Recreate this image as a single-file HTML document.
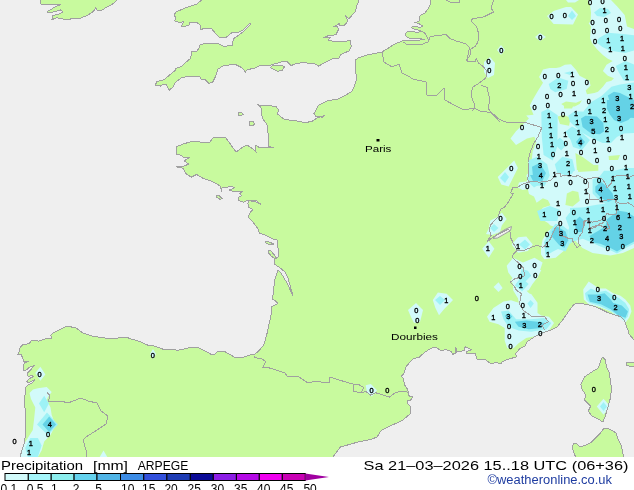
<!DOCTYPE html><html><head><meta charset="utf-8"><style>
html,body{margin:0;padding:0;background:#fff;}
body{width:634px;height:490px;overflow:hidden;position:relative;font-family:"Liberation Sans",sans-serif;}
svg{position:absolute;left:0;top:0;will-change:transform;}
</style></head><body>
<svg width="634" height="490" viewBox="0 0 634 490">
<rect x="0" y="0" width="634" height="457" fill="#c8fa9e"/>
<polygon points="-3.0,-3.0 40.4,-3.0 40.4,3.8 44.0,5.0 51.7,4.5 60.6,4.5 54.0,7.6 46.7,12.0 49.0,13.0 60.6,10.0 63.0,12.0 59.0,13.9 53.0,15.6 51.7,19.7 56.8,17.7 63.0,19.0 68.0,20.0 73.0,18.0 80.8,18.0 87.0,15.6 93.4,11.4 96.0,7.6 97.0,10.0 101.0,10.6 106.0,7.6 111.0,5.0 116.0,1.3 118.6,-3.0 205.0,-3.0 197.0,4.0 185.0,8.0 176.0,12.0 174.0,15.0 176.0,18.0 174.3,20.9 179.5,22.6 183.8,21.7 181.2,26.0 183.8,27.0 189.0,24.9 190.0,22.6 196.8,22.6 200.3,25.2 200.3,29.5 205.5,28.3 211.6,28.7 216.0,33.9 219.4,37.3 226.3,37.3 231.5,33.0 238.5,32.1 243.7,29.5 249.8,23.5 250.6,24.3 243.7,31.3 236.7,36.5 233.3,39.0 232.4,45.2 227.2,46.0 222.9,46.0 217.7,43.4 209.0,43.4 200.3,44.3 199.4,47.8 196.8,51.2 191.6,51.2 190.8,58.2 184.7,63.4 182.1,66.0 176.0,68.6 175.2,70.3 169.0,75.5 163.9,79.9 157.0,81.6 155.2,85.0 160.4,86.0 163.0,84.2 166.5,85.0 169.0,90.3 173.4,86.8 175.2,82.5 182.1,77.3 191.6,76.4 199.4,76.4 201.2,79.0 205.5,79.9 209.0,83.3 212.5,82.5 216.0,75.5 217.7,69.4 222.9,66.0 229.8,64.8 235.0,64.2 240.2,66.8 243.7,69.4 245.4,72.0 247.2,69.4 254.0,68.6 257.6,66.8 261.0,65.0 271.0,65.0 281.0,62.0 287.4,61.7 291.0,65.7 294.7,64.0 303.9,62.4 309.4,63.5 315.0,64.0 318.6,66.1 324.0,63.0 333.3,58.4 338.8,58.4 340.7,54.7 344.3,52.9 349.0,51.0 350.8,47.4 351.2,46.9 350.7,40.8 348.7,40.8 339.5,41.8 333.9,41.3 328.3,40.3 330.3,37.2 323.2,37.8 328.3,35.7 335.9,34.7 338.5,29.6 337.4,26.5 332.9,27.0 339.5,23.5 340.0,25.5 344.6,25.0 347.7,21.4 345.6,15.3 348.7,18.9 355.8,11.2 356.3,7.1 357.9,3.1 359.4,-3.0 431.0,-3.0 430.7,3.1 428.7,8.2 424.6,13.3 420.5,15.3 419.5,16.8 420.0,20.4 417.4,21.9 415.4,22.4 419.5,24.0 422.6,26.0 420.5,27.6 414.9,26.0 411.8,27.0 412.3,28.6 416.4,29.6 422.0,31.5 418.0,32.2 407.2,31.6 405.2,33.7 406.2,36.2 408.3,37.8 412.0,38.6 418.5,38.6 425.0,39.3 418.0,40.3 410.0,40.5 403.2,40.6 395.0,43.9 382.0,52.0 368.2,54.7 359.0,57.5 355.4,60.2 356.3,80.4 354.4,86.0 351.7,91.5 344.3,96.0 338.8,98.8 327.8,100.7 318.6,105.3 314.0,113.5 315.8,116.3 322.3,117.2 325.0,115.4 316.8,118.0 313.0,120.9 305.7,122.7 296.5,120.9 289.2,120.0 283.7,118.9 277.4,113.9 278.6,110.0 276.0,106.3 258.4,105.0 261.0,107.6 262.2,117.7 267.3,125.2 268.5,137.9 268.5,146.7 273.6,147.4 260.0,148.0 256.0,145.0 255.0,148.0 256.0,152.0 253.0,149.0 247.0,145.0 243.0,147.0 236.0,152.0 226.0,138.0 221.0,137.0 213.0,138.0 210.0,142.0 204.0,142.0 200.0,142.0 198.0,141.0 190.0,142.0 183.0,144.0 176.0,147.0 176.0,154.0 180.0,155.0 185.0,158.0 190.0,157.0 184.0,161.0 189.0,164.0 184.0,166.0 176.4,166.9 182.7,168.1 186.5,174.4 191.5,177.0 196.6,174.4 202.9,178.2 210.5,180.8 215.0,182.9 220.7,186.4 221.4,192.1 222.0,187.9 227.9,187.1 232.0,186.0 234.3,187.9 229.3,190.0 233.6,191.4 242.0,191.4 240.0,193.6 241.4,195.7 237.9,197.9 238.6,200.7 243.6,202.1 247.9,200.0 253.6,200.0 256.4,200.7 260.7,204.3 256.4,202.1 249.3,200.7 247.9,203.6 248.6,207.1 252.9,209.3 249.3,213.6 248.6,217.9 252.9,222.1 257.9,228.6 259.3,232.9 266.4,235.7 273.6,239.3 277.1,240.0 277.1,245.0 279.0,251.0 278.0,257.0 275.0,259.0 274.0,264.0 279.0,267.0 285.0,272.0 288.0,278.0 290.0,285.0 293.0,296.0 287.0,283.0 281.0,273.0 278.0,270.0 276.0,276.0 274.5,280.0 273.9,288.0 272.5,299.0 275.0,300.5 278.0,303.7 274.5,305.3 271.6,307.0 271.8,310.6 269.8,320.8 266.7,335.0 263.7,345.0 258.6,351.0 254.5,354.5 250.4,355.0 244.3,357.0 240.0,357.3 234.6,357.3 225.2,351.8 217.3,351.5 214.9,354.2 211.0,354.2 204.7,351.0 199.1,347.9 194.4,347.1 188.9,347.9 177.9,350.2 171.5,349.4 163.7,349.4 152.6,345.5 147.9,345.2 140.0,341.5 131.0,339.0 126.0,337.0 111.0,339.0 92.0,336.0 83.0,333.0 76.0,328.0 67.0,326.0 61.0,329.0 53.0,333.0 50.8,335.0 51.4,338.1 45.9,338.7 38.5,341.1 35.4,340.5 31.2,340.5 29.3,343.6 22.6,344.8 19.5,348.5 18.9,353.4 17.7,354.6 21.4,354.6 22.6,358.3 23.8,361.3 28.7,361.3 25.0,362.6 23.2,365.6 23.8,370.5 26.3,369.9 29.9,366.9 34.2,365.6 31.2,369.3 27.5,373.0 28.1,376.7 31.8,375.4 33.6,376.7 29.3,378.5 26.9,381.6 28.7,382.8 34.8,379.7 32.4,382.8 27.5,385.2 25.6,387.7 25.0,395.0 24.0,400.0 26.0,415.0 25.0,438.0 24.0,444.0 19.0,460.0 -3.0,460.0" fill="#efefef"/>
<polygon points="333.0,457.0 340.5,447.0 358.0,442.0 370.8,439.5 377.0,437.0 381.0,430.7 391.0,425.6 402.0,420.6 410.0,414.0 410.7,410.0 410.0,405.7 407.1,402.9 407.9,400.0 410.7,400.0 412.9,397.1 408.6,395.7 407.9,390.0 404.3,384.3 403.6,378.6 401.4,376.4 404.3,372.9 405.7,367.1 409.3,362.9 413.6,358.6 419.3,357.1 425.0,352.1 431.3,348.1 436.0,347.4 440.8,350.5 446.3,349.7 451.0,351.3 452.6,354.4 455.8,352.9 455.8,346.6 456.5,352.1 464.4,350.5 465.2,346.6 471.5,349.7 466.8,351.3 466.0,353.7 475.5,353.7 477.0,359.2 485.7,360.0 491.2,363.9 496.0,362.3 500.7,363.9 502.3,361.5 508.6,359.2 516.5,356.8 515.7,353.7 519.6,348.9 525.0,345.8 527.0,341.8 534.6,336.8 542.0,333.0 549.7,330.5 557.3,326.7 562.3,320.4 568.6,311.5 574.0,304.3 578.9,303.1 586.2,304.3 593.6,306.1 600.9,309.2 608.3,312.9 615.6,315.3 620.5,316.5 624.2,320.2 625.4,322.7 626.7,327.5 627.9,330.0 629.1,334.2 634.0,339.9 634.0,457.0" fill="#efefef"/>
<polygon points="602.9,357.2 605.3,359.6 606.6,367.0 609.0,371.9 610.2,379.2 611.5,389.0 610.2,398.8 607.8,407.4 605.3,416.0 602.9,422.0 599.2,419.6 591.9,416.0 588.2,411.0 590.6,406.2 584.5,400.0 585.7,395.1 582.0,389.0 580.8,384.1 584.5,376.8 591.9,371.9 598.0,368.2 600.4,362.0 601.7,358.4" fill="#c8fa9e"/>
<polygon points="573.5,443.0 572.3,447.8 574.7,455.2 577.0,458.0 623.7,458.0 621.3,445.4 617.6,438.0 616.4,433.1 607.8,428.2 604.0,428.2 600.4,433.1 591.9,441.7 585.7,445.4 579.6,446.6 575.9,443.0" fill="#c8fa9e"/>
<polygon points="270.3,67.7 272.6,65.5 282.0,65.0 284.4,67.0 282.0,70.5 277.4,71.3 274.2,69.7" fill="#c8fa9e"/>
<polygon points="626.0,363.0 630.0,362.0 634.0,362.0 634.0,366.0 629.0,366.0 626.0,365.0" fill="#c8fa9e"/>
<polygon points="216.4,196.0 219.0,195.5 222.0,198.5 220.0,199.3 217.0,197.5" fill="#c8fa9e"/>
<polygon points="265.0,241.0 268.0,241.5 274.0,244.0 273.0,245.0 268.0,244.0 265.0,242.5" fill="#c8fa9e"/>
<polygon points="268.0,250.0 271.0,251.0 276.0,257.0 275.0,259.0 271.0,256.0 268.0,252.0" fill="#c8fa9e"/>
<polygon points="238.0,113.0 241.0,112.0 243.0,114.5 241.0,116.0 238.0,115.5" fill="#c8fa9e"/>
<polygon points="249.0,122.0 253.0,121.5 255.0,124.0 252.0,126.0 249.0,125.0" fill="#c8fa9e"/>
<g>
<polygon points="588.0,0.0 611.0,0.0 617.0,6.3 624.7,15.0 627.0,26.5 634.0,29.0 634.0,248.0 622.9,253.0 610.3,255.6 592.6,253.0 582.5,248.0 575.0,240.5 568.0,244.0 565.5,249.5 555.7,257.7 544.3,259.3 541.0,254.4 541.0,247.9 542.6,239.7 547.5,231.5 554.3,226.7 550.5,225.5 548.0,223.0 541.6,219.2 539.1,212.9 542.9,207.8 550.5,205.3 548.0,200.2 542.9,198.3 536.6,202.8 534.0,196.5 529.0,193.9 527.8,188.9 522.7,190.1 517.7,187.6 518.9,182.6 527.1,181.3 526.5,175.0 528.0,173.5 530.7,168.0 531.7,160.6 532.6,151.4 536.3,142.3 534.4,136.7 527.0,138.6 516.0,145.0 510.5,138.6 516.0,131.2 528.9,118.4 526.2,115.6 533.5,114.7 529.8,105.5 532.6,100.0 538.0,90.8 543.0,82.7 539.0,77.0 540.5,74.5 543.0,69.6 549.5,68.0 556.0,68.0 560.0,67.2 564.9,64.8 571.0,64.2 575.9,69.7 579.6,75.8 584.5,78.3 589.4,80.7 590.6,85.6 585.7,90.5 587.0,94.2 594.3,93.0 598.0,91.7 602.9,86.8 606.5,82.0 611.4,80.7 613.9,78.3 607.8,75.8 602.9,70.9 606.5,64.8 612.7,61.1 607.8,58.7 602.9,55.0 597.0,49.2 592.0,43.0 590.0,37.9 591.0,26.5 588.7,23.3 590.6,21.5 591.0,12.6 590.0,5.0" fill="#d2fafa"/>
<polygon points="547.0,16.0 553.6,11.0 566.0,7.0 571.0,7.0 578.0,14.5 573.0,24.5 553.6,24.0" fill="#d2fafa"/>
<polygon points="566.0,0.0 579.0,0.0 575.0,2.5 568.0,2.5" fill="#d2fafa"/>
<polygon points="535.0,37.0 540.0,33.0 546.0,37.0 540.0,41.0" fill="#d2fafa"/>
<polygon points="497.0,50.0 501.0,45.0 505.0,50.0 501.0,55.0" fill="#d2fafa"/>
<polygon points="484.0,62.0 490.0,57.0 495.0,63.0 494.0,75.0 488.0,78.0 484.0,72.0" fill="#d2fafa"/>
<polygon points="497.7,177.0 505.0,169.8 514.2,160.6 517.9,168.0 508.7,186.4 501.3,184.5" fill="#d2fafa"/>
<polygon points="490.3,220.6 496.9,217.3 501.8,212.4 506.7,219.0 501.8,225.5 500.0,232.0 492.0,235.0 486.0,234.0 488.7,228.8" fill="#d2fafa"/>
<polygon points="482.2,248.7 488.7,241.3 494.4,248.7 488.7,257.7" fill="#d2fafa"/>
<polygon points="511.6,244.6 518.1,237.3 526.3,236.4 532.8,244.6 527.9,251.1 518.1,252.8" fill="#d2fafa"/>
<polygon points="506.7,265.8 513.2,257.7 523.0,262.6 534.5,257.7 542.6,262.6 537.7,277.3 529.6,283.8 526.3,290.4 532.8,296.9 536.1,305.0 519.8,305.0 518.1,298.5 513.2,290.4 513.2,278.9 508.3,272.4" fill="#d2fafa"/>
<polygon points="493.6,287.1 498.5,282.2 502.6,287.9 498.5,292.0" fill="#d2fafa"/>
<polygon points="583.2,289.6 588.7,281.6 593.6,284.7 598.5,288.4 605.8,288.4 613.2,293.3 620.5,295.7 625.4,299.4 630.3,305.5 631.5,311.6 629.1,317.8 625.4,322.7 620.5,319.0 610.7,311.6 598.5,306.7 588.7,304.3 583.8,299.4" fill="#d2fafa"/>
<polygon points="487.0,316.7 493.4,307.9 503.5,301.5 511.0,300.3 518.6,302.8 518.6,295.2 523.7,292.7 531.2,294.0 537.5,302.8 537.5,312.9 541.3,315.4 548.9,316.7 554.0,323.0 548.9,330.6 538.8,335.6 526.2,338.1 518.6,343.2 513.6,348.2 507.3,348.2 504.7,340.7 504.7,328.0 498.4,324.3 489.6,321.7" fill="#d2fafa"/>
<polygon points="511.0,280.0 516.0,273.8 518.6,270.0 541.3,270.0 537.5,277.6 532.5,283.9 528.7,290.2 523.7,291.5 516.0,290.2" fill="#d2fafa"/>
<polygon points="432.8,300.0 437.9,292.5 446.7,293.8 453.0,300.0 444.2,309.0 439.0,315.2 435.3,307.7" fill="#d2fafa"/>
<polygon points="408.0,310.0 416.0,303.0 423.0,310.0 420.0,322.0 414.0,323.0 411.0,317.0" fill="#d2fafa"/>
<polygon points="365.7,385.2 370.8,384.0 377.0,390.3 372.0,396.6 367.0,392.8" fill="#d2fafa"/>
<polygon points="35.3,373.0 40.4,366.8 45.4,374.4 40.4,380.7" fill="#d2fafa"/>
<polygon points="150.0,354.0 153.0,349.0 156.0,354.0 153.0,359.0" fill="#d2fafa"/>
<polygon points="37.9,388.2 46.7,387.0 51.7,392.0 48.0,397.0 46.7,400.0 50.5,407.6 51.7,415.0 55.5,425.0 50.5,435.0 44.2,441.6 41.6,450.5 37.9,457.0 20.0,457.0 24.0,444.0 27.8,437.9 32.8,430.0 34.0,420.0 35.3,407.6 31.0,399.0 29.5,393.0 33.0,389.5" fill="#d2fafa"/>
<polygon points="99.7,457.0 103.5,450.5 107.3,457.0" fill="#d2fafa"/>
<polygon points="596.8,406.5 603.5,398.8 610.2,406.5 603.5,414.7" fill="#d2fafa"/>
<polygon points="557.5,116.4 564.0,115.0 570.8,118.0 569.0,125.8 560.0,124.0" fill="#c8fa9e"/>
<polygon points="561.2,104.0 566.0,101.5 576.0,102.8 582.0,100.3 579.6,104.0 574.7,106.4 564.9,106.4" fill="#c8fa9e"/>
<polygon points="575.4,152.9 582.6,157.1 592.6,164.3 595.4,170.0 576.9,170.0" fill="#c8fa9e"/>
<polygon points="576.9,165.0 598.3,165.0 598.3,170.7 578.3,172.1" fill="#c8fa9e"/>
<polygon points="566.9,193.6 572.6,190.7 578.3,192.1 579.7,200.7 572.6,206.4 565.4,205.0" fill="#c8fa9e"/>
<polygon points="564.0,103.0 574.0,104.0 572.0,108.6 564.0,108.6" fill="#c8fa9e"/>
<polygon points="608.6,156.0 620.0,155.0 618.0,160.0 609.0,160.0" fill="#c8fa9e"/>
<polygon points="594.0,12.5 600.0,8.0 608.0,9.0 611.0,13.0 604.0,17.0 597.0,16.0" fill="#9ef2f6"/>
<polygon points="568.0,16.0 572.0,10.6 576.0,16.0 572.0,20.0" fill="#9ef2f6"/>
<polygon points="599.0,37.9 608.0,32.8 623.0,34.0 634.0,35.3 634.0,50.5 625.0,53.0 609.5,50.5 602.0,46.7 596.0,42.0" fill="#9ef2f6"/>
<polygon points="615.7,66.0 625.5,61.0 634.0,64.5 634.0,80.8 623.9,80.8 619.0,72.7" fill="#9ef2f6"/>
<polygon points="583.0,112.0 591.2,102.0 601.6,96.0 611.4,86.8 620.0,84.4 634.0,82.5 634.0,132.9 624.0,133.6 616.9,137.0 611.0,142.9 602.6,142.9 592.6,138.6 582.6,132.9 574.0,125.7 569.7,121.4 568.3,115.7 574.0,111.4 582.6,111.4" fill="#9ef2f6"/>
<polygon points="566.9,132.9 572.6,127.1 579.7,132.9 586.9,141.4 581.1,147.1 574.0,142.9 568.3,137.1" fill="#9ef2f6"/>
<polygon points="564.0,165.0 572.6,165.0 572.6,173.6 564.0,176.4" fill="#9ef2f6"/>
<polygon points="592.6,179.3 599.7,176.4 604.0,170.7 614.0,170.7 625.4,167.9 634.0,167.9 634.0,243.7 625.8,248.1 617.0,253.6 610.4,250.3 599.3,245.9 589.4,241.5 582.8,238.7 572.8,241.5 566.0,247.0 569.4,244.0 568.2,230.1 572.6,222.1 578.3,210.7 586.9,206.4 595.4,205.0 605.4,203.6 599.7,200.7 592.6,193.6 592.6,185.0" fill="#9ef2f6"/>
<polygon points="548.7,84.0 558.5,77.6 568.3,80.8 566.7,89.0 555.2,92.3 550.3,89.0" fill="#9ef2f6"/>
<polygon points="541.3,112.0 548.0,108.8 557.7,115.3 557.4,146.0 552.8,160.6 543.6,155.0 541.8,136.7" fill="#9ef2f6"/>
<polygon points="564.0,73.0 570.0,71.5 575.0,72.0 570.0,75.0" fill="#9ef2f6"/>
<polygon points="553.5,142.8 559.8,137.8 567.4,144.1 561.1,150.4" fill="#9ef2f6"/>
<polygon points="554.8,164.3 562.3,156.7 572.4,159.2 575.0,170.6 567.4,175.6 557.3,173.1" fill="#9ef2f6"/>
<polygon points="570.0,138.0 578.0,129.0 590.0,140.0 582.0,150.0 573.0,147.0" fill="#9ef2f6"/>
<polygon points="565.0,132.0 572.0,126.4 580.0,131.0 573.0,137.8" fill="#9ef2f6"/>
<polygon points="528.3,160.5 537.1,156.7 547.2,164.3 549.7,175.6 544.7,185.7 532.0,185.7 528.3,175.6" fill="#9ef2f6"/>
<polygon points="527.8,175.0 546.7,175.0 546.7,180.0 540.4,183.8 534.0,187.6 530.3,183.8 527.8,180.0" fill="#9ef2f6"/>
<polygon points="537.1,211.0 549.7,205.9 559.8,209.7 557.3,221.0 540.4,221.0" fill="#9ef2f6"/>
<polygon points="570.0,208.0 585.0,207.2 592.6,211.0 585.0,230.0 570.0,230.0" fill="#9ef2f6"/>
<polygon points="569.4,212.9 580.0,210.3 580.0,235.0 569.4,228.0 565.6,217.9" fill="#9ef2f6"/>
<polygon points="500.0,178.0 505.0,172.0 509.0,177.0 505.0,183.0" fill="#9ef2f6"/>
<polygon points="490.0,228.0 494.0,224.0 498.5,228.0 494.0,232.0" fill="#9ef2f6"/>
<polygon points="549.2,231.4 555.5,223.8 561.9,225.1 568.2,230.1 569.4,244.0 565.6,251.6 558.0,249.0 553.0,251.6 545.5,256.0 544.0,242.0 547.0,236.0" fill="#9ef2f6"/>
<polygon points="519.0,244.6 525.0,239.5 530.0,244.6 525.0,249.5" fill="#9ef2f6"/>
<polygon points="521.4,269.1 527.9,270.8 531.2,275.7 524.7,282.2 521.4,290.4 514.8,285.5 519.8,278.9" fill="#9ef2f6"/>
<polygon points="585.0,293.3 590.9,288.4 598.5,292.0 605.8,290.8 612.0,294.5 619.3,298.2 625.4,303.1 629.1,309.2 627.9,316.5 624.2,320.2 619.3,316.5 609.5,310.4 598.5,305.5 589.9,303.1 586.2,299.4" fill="#9ef2f6"/>
<polygon points="501.0,311.6 508.5,310.4 516.1,319.2 531.2,319.2 543.8,318.0 551.4,323.0 546.4,329.3 531.2,331.8 518.6,330.6 508.5,326.8 503.5,319.2" fill="#9ef2f6"/>
<polygon points="527.4,303.5 530.6,300.0 533.8,303.5 530.6,307.9" fill="#9ef2f6"/>
<polygon points="516.0,284.0 521.0,277.6 528.7,284.0 522.0,291.5" fill="#9ef2f6"/>
<polygon points="435.0,300.0 440.0,296.0 445.0,300.0 440.0,305.0" fill="#9ef2f6"/>
<polygon points="44.2,395.8 49.0,403.4 44.2,412.2 39.0,403.4" fill="#9ef2f6"/>
<polygon points="47.0,412.6 58.0,424.6 48.0,435.3 37.0,424.6" fill="#9ef2f6"/>
<polygon points="30.3,437.9 37.9,437.9 41.6,445.4 37.9,457.0 27.8,457.0 25.2,448.0" fill="#9ef2f6"/>
<polygon points="600.0,406.5 603.5,402.0 607.0,406.5 603.5,411.0" fill="#9ef2f6"/>
<polygon points="607.8,95.4 613.9,91.7 620.0,93.0 634.0,100.0 634.0,118.0 620.0,117.0 611.4,106.4" fill="#64d2e6"/>
<polygon points="581.0,118.6 585.4,115.7 596.9,116.4 603.3,122.9 604.0,131.4 599.7,134.3 591.0,133.6 582.6,127.1" fill="#64d2e6"/>
<polygon points="606.9,100.0 634.0,100.0 634.0,114.3 628.3,120.0 621.0,122.9 614.0,120.0 609.7,114.3 606.9,108.6" fill="#64d2e6"/>
<polygon points="595.4,186.4 601.1,182.1 606.9,186.4 612.6,193.6 614.0,199.3 608.3,202.1 601.1,197.9 595.4,192.1" fill="#64d2e6"/>
<polygon points="605.4,226.4 606.9,219.3 618.3,210.7 626.9,212.1 634.0,216.4 634.0,241.5 625.8,246.0 617.0,251.4 610.4,248.1 600.4,243.7 592.7,242.6 589.4,236.0 597.1,231.6" fill="#64d2e6"/>
<polygon points="574.0,222.1 579.7,216.4 585.4,222.1 582.6,232.1 576.9,232.1" fill="#64d2e6"/>
<polygon points="532.0,166.8 539.6,163.0 545.9,173.1 542.1,181.9 533.3,179.4" fill="#64d2e6"/>
<polygon points="576.0,142.0 580.4,136.5 585.0,142.0 580.4,147.9" fill="#64d2e6"/>
<polygon points="530.0,175.0 544.0,175.0 540.0,181.0 533.0,181.0" fill="#64d2e6"/>
<polygon points="551.8,231.4 556.8,226.4 565.6,231.4 568.2,240.2 564.4,247.8 559.3,245.3 551.8,236.5" fill="#64d2e6"/>
<polygon points="587.5,294.5 598.5,294.5 604.6,293.3 610.7,299.4 613.2,303.1 621.8,305.5 627.9,311.6 625.4,317.8 618.1,315.3 610.7,309.2 600.9,304.3 589.9,301.8" fill="#64d2e6"/>
<polygon points="514.8,321.7 526.2,320.5 537.5,321.7 545.1,323.0 541.3,328.0 528.7,329.3 518.6,326.8" fill="#64d2e6"/>
<polygon points="504.7,316.0 508.5,312.9 512.3,316.5 508.5,320.5" fill="#64d2e6"/>
<polygon points="49.2,416.4 56.0,424.6 49.2,432.0 42.5,424.6" fill="#64d2e6"/>
</g>
<g fill="none" stroke="#a0a0a0" stroke-width="1" shape-rendering="crispEdges">
<polygon points="-3.0,-3.0 40.4,-3.0 40.4,3.8 44.0,5.0 51.7,4.5 60.6,4.5 54.0,7.6 46.7,12.0 49.0,13.0 60.6,10.0 63.0,12.0 59.0,13.9 53.0,15.6 51.7,19.7 56.8,17.7 63.0,19.0 68.0,20.0 73.0,18.0 80.8,18.0 87.0,15.6 93.4,11.4 96.0,7.6 97.0,10.0 101.0,10.6 106.0,7.6 111.0,5.0 116.0,1.3 118.6,-3.0 205.0,-3.0 197.0,4.0 185.0,8.0 176.0,12.0 174.0,15.0 176.0,18.0 174.3,20.9 179.5,22.6 183.8,21.7 181.2,26.0 183.8,27.0 189.0,24.9 190.0,22.6 196.8,22.6 200.3,25.2 200.3,29.5 205.5,28.3 211.6,28.7 216.0,33.9 219.4,37.3 226.3,37.3 231.5,33.0 238.5,32.1 243.7,29.5 249.8,23.5 250.6,24.3 243.7,31.3 236.7,36.5 233.3,39.0 232.4,45.2 227.2,46.0 222.9,46.0 217.7,43.4 209.0,43.4 200.3,44.3 199.4,47.8 196.8,51.2 191.6,51.2 190.8,58.2 184.7,63.4 182.1,66.0 176.0,68.6 175.2,70.3 169.0,75.5 163.9,79.9 157.0,81.6 155.2,85.0 160.4,86.0 163.0,84.2 166.5,85.0 169.0,90.3 173.4,86.8 175.2,82.5 182.1,77.3 191.6,76.4 199.4,76.4 201.2,79.0 205.5,79.9 209.0,83.3 212.5,82.5 216.0,75.5 217.7,69.4 222.9,66.0 229.8,64.8 235.0,64.2 240.2,66.8 243.7,69.4 245.4,72.0 247.2,69.4 254.0,68.6 257.6,66.8 261.0,65.0 271.0,65.0 281.0,62.0 287.4,61.7 291.0,65.7 294.7,64.0 303.9,62.4 309.4,63.5 315.0,64.0 318.6,66.1 324.0,63.0 333.3,58.4 338.8,58.4 340.7,54.7 344.3,52.9 349.0,51.0 350.8,47.4 351.2,46.9 350.7,40.8 348.7,40.8 339.5,41.8 333.9,41.3 328.3,40.3 330.3,37.2 323.2,37.8 328.3,35.7 335.9,34.7 338.5,29.6 337.4,26.5 332.9,27.0 339.5,23.5 340.0,25.5 344.6,25.0 347.7,21.4 345.6,15.3 348.7,18.9 355.8,11.2 356.3,7.1 357.9,3.1 359.4,-3.0 431.0,-3.0 430.7,3.1 428.7,8.2 424.6,13.3 420.5,15.3 419.5,16.8 420.0,20.4 417.4,21.9 415.4,22.4 419.5,24.0 422.6,26.0 420.5,27.6 414.9,26.0 411.8,27.0 412.3,28.6 416.4,29.6 422.0,31.5 418.0,32.2 407.2,31.6 405.2,33.7 406.2,36.2 408.3,37.8 412.0,38.6 418.5,38.6 425.0,39.3 418.0,40.3 410.0,40.5 403.2,40.6 395.0,43.9 382.0,52.0 368.2,54.7 359.0,57.5 355.4,60.2 356.3,80.4 354.4,86.0 351.7,91.5 344.3,96.0 338.8,98.8 327.8,100.7 318.6,105.3 314.0,113.5 315.8,116.3 322.3,117.2 325.0,115.4 316.8,118.0 313.0,120.9 305.7,122.7 296.5,120.9 289.2,120.0 283.7,118.9 277.4,113.9 278.6,110.0 276.0,106.3 258.4,105.0 261.0,107.6 262.2,117.7 267.3,125.2 268.5,137.9 268.5,146.7 273.6,147.4 260.0,148.0 256.0,145.0 255.0,148.0 256.0,152.0 253.0,149.0 247.0,145.0 243.0,147.0 236.0,152.0 226.0,138.0 221.0,137.0 213.0,138.0 210.0,142.0 204.0,142.0 200.0,142.0 198.0,141.0 190.0,142.0 183.0,144.0 176.0,147.0 176.0,154.0 180.0,155.0 185.0,158.0 190.0,157.0 184.0,161.0 189.0,164.0 184.0,166.0 176.4,166.9 182.7,168.1 186.5,174.4 191.5,177.0 196.6,174.4 202.9,178.2 210.5,180.8 215.0,182.9 220.7,186.4 221.4,192.1 222.0,187.9 227.9,187.1 232.0,186.0 234.3,187.9 229.3,190.0 233.6,191.4 242.0,191.4 240.0,193.6 241.4,195.7 237.9,197.9 238.6,200.7 243.6,202.1 247.9,200.0 253.6,200.0 256.4,200.7 260.7,204.3 256.4,202.1 249.3,200.7 247.9,203.6 248.6,207.1 252.9,209.3 249.3,213.6 248.6,217.9 252.9,222.1 257.9,228.6 259.3,232.9 266.4,235.7 273.6,239.3 277.1,240.0 277.1,245.0 279.0,251.0 278.0,257.0 275.0,259.0 274.0,264.0 279.0,267.0 285.0,272.0 288.0,278.0 290.0,285.0 293.0,296.0 287.0,283.0 281.0,273.0 278.0,270.0 276.0,276.0 274.5,280.0 273.9,288.0 272.5,299.0 275.0,300.5 278.0,303.7 274.5,305.3 271.6,307.0 271.8,310.6 269.8,320.8 266.7,335.0 263.7,345.0 258.6,351.0 254.5,354.5 250.4,355.0 244.3,357.0 240.0,357.3 234.6,357.3 225.2,351.8 217.3,351.5 214.9,354.2 211.0,354.2 204.7,351.0 199.1,347.9 194.4,347.1 188.9,347.9 177.9,350.2 171.5,349.4 163.7,349.4 152.6,345.5 147.9,345.2 140.0,341.5 131.0,339.0 126.0,337.0 111.0,339.0 92.0,336.0 83.0,333.0 76.0,328.0 67.0,326.0 61.0,329.0 53.0,333.0 50.8,335.0 51.4,338.1 45.9,338.7 38.5,341.1 35.4,340.5 31.2,340.5 29.3,343.6 22.6,344.8 19.5,348.5 18.9,353.4 17.7,354.6 21.4,354.6 22.6,358.3 23.8,361.3 28.7,361.3 25.0,362.6 23.2,365.6 23.8,370.5 26.3,369.9 29.9,366.9 34.2,365.6 31.2,369.3 27.5,373.0 28.1,376.7 31.8,375.4 33.6,376.7 29.3,378.5 26.9,381.6 28.7,382.8 34.8,379.7 32.4,382.8 27.5,385.2 25.6,387.7 25.0,395.0 24.0,400.0 26.0,415.0 25.0,438.0 24.0,444.0 19.0,460.0 -3.0,460.0"/>
<polygon points="333.0,457.0 340.5,447.0 358.0,442.0 370.8,439.5 377.0,437.0 381.0,430.7 391.0,425.6 402.0,420.6 410.0,414.0 410.7,410.0 410.0,405.7 407.1,402.9 407.9,400.0 410.7,400.0 412.9,397.1 408.6,395.7 407.9,390.0 404.3,384.3 403.6,378.6 401.4,376.4 404.3,372.9 405.7,367.1 409.3,362.9 413.6,358.6 419.3,357.1 425.0,352.1 431.3,348.1 436.0,347.4 440.8,350.5 446.3,349.7 451.0,351.3 452.6,354.4 455.8,352.9 455.8,346.6 456.5,352.1 464.4,350.5 465.2,346.6 471.5,349.7 466.8,351.3 466.0,353.7 475.5,353.7 477.0,359.2 485.7,360.0 491.2,363.9 496.0,362.3 500.7,363.9 502.3,361.5 508.6,359.2 516.5,356.8 515.7,353.7 519.6,348.9 525.0,345.8 527.0,341.8 534.6,336.8 542.0,333.0 549.7,330.5 557.3,326.7 562.3,320.4 568.6,311.5 574.0,304.3 578.9,303.1 586.2,304.3 593.6,306.1 600.9,309.2 608.3,312.9 615.6,315.3 620.5,316.5 624.2,320.2 625.4,322.7 626.7,327.5 627.9,330.0 629.1,334.2 634.0,339.9 634.0,457.0"/>
<polygon points="602.9,357.2 605.3,359.6 606.6,367.0 609.0,371.9 610.2,379.2 611.5,389.0 610.2,398.8 607.8,407.4 605.3,416.0 602.9,422.0 599.2,419.6 591.9,416.0 588.2,411.0 590.6,406.2 584.5,400.0 585.7,395.1 582.0,389.0 580.8,384.1 584.5,376.8 591.9,371.9 598.0,368.2 600.4,362.0 601.7,358.4"/>
<polygon points="573.5,443.0 572.3,447.8 574.7,455.2 577.0,458.0 623.7,458.0 621.3,445.4 617.6,438.0 616.4,433.1 607.8,428.2 604.0,428.2 600.4,433.1 591.9,441.7 585.7,445.4 579.6,446.6 575.9,443.0"/>
<polygon points="270.3,67.7 272.6,65.5 282.0,65.0 284.4,67.0 282.0,70.5 277.4,71.3 274.2,69.7"/>
<polygon points="626.0,363.0 630.0,362.0 634.0,362.0 634.0,366.0 629.0,366.0 626.0,365.0"/>
<polygon points="216.4,196.0 219.0,195.5 222.0,198.5 220.0,199.3 217.0,197.5"/>
<polygon points="265.0,241.0 268.0,241.5 274.0,244.0 273.0,245.0 268.0,244.0 265.0,242.5"/>
<polygon points="268.0,250.0 271.0,251.0 276.0,257.0 275.0,259.0 271.0,256.0 268.0,252.0"/>
<polygon points="238.0,113.0 241.0,112.0 243.0,114.5 241.0,116.0 238.0,115.5"/>
<polygon points="249.0,122.0 253.0,121.5 255.0,124.0 252.0,126.0 249.0,125.0"/>
</g>
<polygon points="493.0,238.5 498.5,233.5 505.0,229.5 511.5,226.5 510.5,230.5 504.5,234.0 497.5,238.0" fill="#efefef" stroke="#a0a0a0" stroke-width="1"/>
<g fill="none" stroke="#a0a0a0" stroke-width="1" stroke-linejoin="round" shape-rendering="crispEdges">
<polyline points="382.0,52.0 384.0,62.0 392.0,67.0 399.0,64.0 402.0,73.0 408.0,76.0 413.0,79.0 426.0,82.0 427.0,95.0 436.0,96.0 444.0,88.0 445.0,100.0 454.0,105.0 464.0,110.0 474.0,108.0 480.0,111.0 490.0,112.4 494.0,114.7 497.7,118.4 503.2,121.0 508.7,123.0 517.9,122.0 527.0,123.0 541.8,127.6 538.0,136.7 533.5,144.0 529.8,153.3 528.0,162.5 528.0,169.8 528.0,177.2 527.9,179.8 529.5,182.2 526.2,183.0 521.3,184.7 518.0,187.1 513.2,187.1 511.6,190.4 510.7,192.9 513.2,193.7 509.1,201.0 505.0,206.7 501.0,209.2 499.3,212.4 498.5,216.5 494.4,220.6 490.3,225.5 489.5,230.4 491.1,235.3 487.9,240.2 487.0,241.8 492.0,238.0 496.9,234.8 508.3,229.1 510.0,231.5 510.8,238.0 513.2,243.0 517.3,250.3 513.2,254.4 512.4,257.7 518.1,262.6 523.0,267.5 524.7,275.7 514.8,278.9 510.0,282.2 514.8,287.1 516.5,290.4 521.4,293.6 520.7,297.0 519.4,304.0 523.2,310.3 532.0,316.6 544.7,316.6 548.4,321.6 542.0,325.4 544.7,330.0"/>
<polyline points="403.0,42.0 408.0,45.0 415.0,44.5 420.0,45.0 428.0,42.0"/>
<polyline points="422.0,31.5 425.6,33.7 427.7,38.8 430.0,40.0"/>
<polyline points="428.0,42.0 430.0,37.0 435.3,35.8 445.9,34.5 449.9,38.5 456.5,41.1 465.8,43.8 469.8,47.7 468.5,51.7 467.0,61.0 475.0,61.5 476.4,58.3 477.7,62.3"/>
<polyline points="493.6,0.0 491.0,8.0 493.6,12.0 483.0,17.2 472.4,18.6 471.1,21.2 476.4,26.5 479.0,34.5 477.7,42.4 475.0,46.4 471.1,49.0 469.8,55.7 465.8,61.0"/>
<polyline points="477.7,62.3 483.0,66.3 487.0,71.6 485.7,78.2 480.4,82.2 472.4,87.5 471.1,95.5 475.0,106.0 472.4,111.4"/>
<polyline points="480.4,84.9 487.0,87.5 489.7,99.4 488.3,108.7 492.3,114.0 500.0,122.0"/>
<polyline points="445.9,0.0 451.2,2.7 459.2,2.7 459.2,0.0"/>
<polyline points="529.5,182.2 532.8,181.4 539.3,182.2 545.8,181.4 550.7,180.6 554.4,176.3 556.4,173.3 560.5,173.3 560.5,176.3 566.7,175.3 574.8,176.3 578.3,175.7 585.4,179.3 592.6,177.9 596.9,177.1 602.6,179.3 605.4,183.6 606.9,187.9 611.0,183.6 612.6,176.4 618.3,175.7 625.4,175.0 628.3,177.9 634.0,175.0"/>
<polyline points="585.4,179.3 588.3,182.1 589.0,186.4 586.1,190.7 589.7,195.0 589.7,199.3 595.4,199.3 602.6,200.7 611.0,199.3 615.4,199.3 616.9,202.1 621.0,203.6 628.3,202.9 634.0,206.4"/>
<polyline points="615.4,199.3 616.9,207.9 616.9,213.6 612.6,215.0 606.9,213.6 604.0,217.9 599.7,220.7 592.6,222.1 585.4,220.7 584.0,223.6 584.0,226.4 583.3,221.3"/>
<polyline points="604.0,217.9 606.9,222.1 609.7,227.9 606.9,229.3 599.7,225.0 592.6,226.4 588.3,229.3"/>
<polyline points="517.3,250.3 524.0,250.3 530.3,247.8 536.6,245.3 543.0,247.2 545.5,245.3 550.5,239.0 551.8,235.2 555.5,227.6 558.0,225.1 559.3,225.1 559.3,235.2 564.4,236.5 568.2,238.3 572.0,238.3 573.2,242.1 577.0,247.8 580.2,245.3 578.3,243.4 578.3,237.7 582.0,232.7 583.3,226.4 583.3,221.3 587.0,220.0 589.6,222.6 589.6,228.9 594.7,227.6 599.7,223.8 604.0,222.6"/>
<polyline points="254.5,355.5 254.5,357.6 261.6,358.6 265.7,361.6 262.7,367.8 268.8,367.8 285.0,372.9 287.0,376.0 299.0,377.0 303.5,380.0 307.7,382.7 315.0,381.5 329.0,382.7 330.0,377.0 344.0,381.5 353.0,384.0 354.0,391.5 360.7,392.8 364.0,387.8 359.0,384.7 353.0,384.0"/>
<polyline points="360.7,392.8 365.7,391.5 370.8,395.3 375.8,392.8 385.0,395.7 389.3,397.1 395.0,392.9 400.7,391.4 407.9,392.1"/>
<polyline points="47.0,392.0 50.0,396.0 48.0,402.0 61.0,401.0 68.0,403.0 81.0,398.0 88.0,401.0 97.0,403.0 101.0,411.0 108.0,416.0 106.0,424.0 97.0,430.0 86.0,437.0 83.0,440.0 86.0,450.0 86.0,458.0"/>
</g>
<g font-family="Liberation Sans, sans-serif" font-size="7.4" fill="#000" stroke="#000" stroke-width="0.35" text-anchor="middle">
<text x="590.0" y="4.5">0</text>
<text x="602.6" y="3.9">0</text>
<text x="564.7" y="17.7">0</text>
<text x="604.5" y="13.3">1</text>
<text x="592.5" y="24.6">0</text>
<text x="605.7" y="22.8">0</text>
<text x="619.0" y="21.5">0</text>
<text x="593.7" y="34.1">0</text>
<text x="607.0" y="32.9">0</text>
<text x="620.2" y="31.0">0</text>
<text x="595.0" y="43.6">0</text>
<text x="608.3" y="43.0">1</text>
<text x="622.0" y="41.1">1</text>
<text x="610.2" y="51.8">1</text>
<text x="622.8" y="50.6">1</text>
<text x="624.7" y="60.6">0</text>
<text x="551.5" y="19.0">0</text>
<text x="540.3" y="39.7">0</text>
<text x="501.3" y="52.5">0</text>
<text x="488.6" y="63.6">0</text>
<text x="489.4" y="73.4">0</text>
<text x="612.5" y="72.1">0</text>
<text x="625.8" y="70.3">1</text>
<text x="627.0" y="80.3">1</text>
<text x="544.8" y="79.0">0</text>
<text x="558.4" y="78.2">0</text>
<text x="572.2" y="76.9">1</text>
<text x="559.4" y="88.0">2</text>
<text x="573.0" y="86.4">0</text>
<text x="586.8" y="85.4">0</text>
<text x="629.2" y="89.6">3</text>
<text x="547.0" y="98.6">0</text>
<text x="560.5" y="97.3">0</text>
<text x="574.0" y="96.3">1</text>
<text x="534.5" y="110.1">0</text>
<text x="547.8" y="108.2">0</text>
<text x="588.9" y="104.2">0</text>
<text x="603.2" y="103.4">1</text>
<text x="617.3" y="101.3">3</text>
<text x="630.5" y="99.4">1</text>
<text x="549.0" y="118.1">1</text>
<text x="563.1" y="117.1">0</text>
<text x="576.1" y="115.9">1</text>
<text x="589.8" y="114.3">1</text>
<text x="604.0" y="112.9">2</text>
<text x="618.0" y="111.2">3</text>
<text x="632.0" y="109.1">2</text>
<text x="522.0" y="130.1">0</text>
<text x="550.3" y="128.2">1</text>
<text x="577.3" y="124.9">1</text>
<text x="591.6" y="124.0">3</text>
<text x="605.2" y="122.3">1</text>
<text x="619.1" y="120.8">3</text>
<text x="551.0" y="137.6">1</text>
<text x="565.2" y="136.6">1</text>
<text x="578.8" y="135.1">1</text>
<text x="593.2" y="133.6">5</text>
<text x="606.8" y="132.2">2</text>
<text x="621.0" y="130.5">0</text>
<text x="538.0" y="149.3">0</text>
<text x="552.1" y="147.4">1</text>
<text x="565.7" y="145.9">0</text>
<text x="580.2" y="144.9">4</text>
<text x="594.0" y="143.5">0</text>
<text x="608.0" y="141.9">1</text>
<text x="622.0" y="140.2">1</text>
<text x="538.9" y="158.6">1</text>
<text x="553.0" y="157.4">0</text>
<text x="566.9" y="156.0">1</text>
<text x="581.0" y="154.8">0</text>
<text x="595.2" y="153.0">1</text>
<text x="609.3" y="151.5">0</text>
<text x="540.0" y="168.2">3</text>
<text x="568.0" y="165.9">2</text>
<text x="597.0" y="163.0">0</text>
<text x="625.0" y="159.6">0</text>
<text x="511.3" y="170.7">0</text>
<text x="540.8" y="178.0">4</text>
<text x="554.6" y="176.9">1</text>
<text x="569.3" y="175.8">1</text>
<text x="611.9" y="170.8">0</text>
<text x="626.0" y="169.5">1</text>
<text x="527.2" y="189.0">0</text>
<text x="542.1" y="188.0">1</text>
<text x="556.0" y="186.9">0</text>
<text x="570.5" y="185.4">0</text>
<text x="585.2" y="184.0">0</text>
<text x="599.0" y="182.6">0</text>
<text x="613.0" y="180.9">1</text>
<text x="627.9" y="179.2">1</text>
<text x="586.0" y="194.0">1</text>
<text x="600.6" y="192.2">4</text>
<text x="615.1" y="191.1">1</text>
<text x="628.8" y="189.0">1</text>
<text x="558.0" y="206.1">1</text>
<text x="587.1" y="204.0">0</text>
<text x="601.3" y="202.4">1</text>
<text x="616.0" y="200.2">3</text>
<text x="629.9" y="199.1">1</text>
<text x="544.2" y="217.3">1</text>
<text x="559.0" y="216.2">0</text>
<text x="573.7" y="215.1">0</text>
<text x="588.1" y="213.2">1</text>
<text x="603.0" y="211.9">1</text>
<text x="617.0" y="210.2">1</text>
<text x="500.6" y="220.9">0</text>
<text x="560.2" y="225.8">0</text>
<text x="574.9" y="224.7">1</text>
<text x="588.9" y="223.1">1</text>
<text x="604.0" y="221.4">0</text>
<text x="618.0" y="220.0">6</text>
<text x="629.4" y="217.9">1</text>
<text x="547.0" y="237.3">0</text>
<text x="561.0" y="235.8">3</text>
<text x="575.8" y="234.1">0</text>
<text x="589.8" y="233.0">1</text>
<text x="605.0" y="231.3">2</text>
<text x="619.8" y="229.9">2</text>
<text x="547.3" y="246.9">1</text>
<text x="562.4" y="245.5">3</text>
<text x="591.8" y="243.1">2</text>
<text x="607.0" y="240.9">4</text>
<text x="621.4" y="239.2">3</text>
<text x="548.0" y="257.0">1</text>
<text x="607.8" y="251.0">0</text>
<text x="622.8" y="249.3">0</text>
<text x="487.9" y="251.2">1</text>
<text x="518.1" y="249.0">1</text>
<text x="519.6" y="268.9">0</text>
<text x="534.6" y="267.6">0</text>
<text x="520.4" y="278.8">0</text>
<text x="535.3" y="277.5">0</text>
<text x="520.8" y="288.1">1</text>
<text x="476.8" y="301.1">0</text>
<text x="507.9" y="308.8">0</text>
<text x="522.8" y="308.0">0</text>
<text x="493.2" y="319.9">1</text>
<text x="508.3" y="318.9">3</text>
<text x="523.9" y="317.9">1</text>
<text x="509.0" y="329.0">0</text>
<text x="524.4" y="327.5">3</text>
<text x="539.8" y="326.7">2</text>
<text x="509.3" y="338.6">0</text>
<text x="540.4" y="336.4">0</text>
<text x="510.6" y="348.7">0</text>
<text x="597.9" y="291.6">0</text>
<text x="599.1" y="301.4">3</text>
<text x="614.4" y="300.2">0</text>
<text x="615.6" y="309.9">2</text>
<text x="593.9" y="391.6">0</text>
<text x="446.2" y="302.7">1</text>
<text x="416.4" y="313.3">0</text>
<text x="417.2" y="323.4">0</text>
<text x="371.5" y="392.9">0</text>
<text x="387.2" y="392.9">0</text>
<text x="39.6" y="376.7">0</text>
<text x="152.7" y="357.5">0</text>
<text x="49.7" y="427.4">4</text>
<text x="48.0" y="437.2">0</text>
<text x="14.6" y="443.5">0</text>
<text x="30.8" y="445.5">1</text>
<text x="29.0" y="455.1">1</text>
</g>
<rect x="376.5" y="139" width="3" height="2.5" fill="#000"/>
<text x="365" y="151.7" textLength="26.4" lengthAdjust="spacingAndGlyphs" font-family="Liberation Sans, sans-serif" font-size="9.5" fill="#000">Paris</text>
<rect x="414" y="326.5" width="2.5" height="2.5" fill="#000"/>
<text x="391" y="339.6" textLength="47" lengthAdjust="spacingAndGlyphs" font-family="Liberation Sans, sans-serif" font-size="9.5" fill="#000">Dourbies</text>
<rect x="0" y="457" width="634" height="33" fill="#fff"/>
<rect x="5.0" y="473.5" width="23.3" height="7" fill="#d2fafa" stroke="#000" stroke-width="1"/>
<rect x="28.3" y="473.5" width="22.9" height="7" fill="#a5f5fa" stroke="#000" stroke-width="1"/>
<rect x="51.2" y="473.5" width="22.9" height="7" fill="#8ceeee" stroke="#000" stroke-width="1"/>
<rect x="74.1" y="473.5" width="22.9" height="7" fill="#64d2ee" stroke="#000" stroke-width="1"/>
<rect x="97.0" y="473.5" width="23.5" height="7" fill="#50b4e6" stroke="#000" stroke-width="1"/>
<rect x="120.5" y="473.5" width="23.3" height="7" fill="#3c8ce6" stroke="#000" stroke-width="1"/>
<rect x="143.8" y="473.5" width="23.1" height="7" fill="#3250dc" stroke="#000" stroke-width="1"/>
<rect x="166.9" y="473.5" width="23.4" height="7" fill="#1e3cb4" stroke="#000" stroke-width="1"/>
<rect x="190.3" y="473.5" width="23.0" height="7" fill="#0a0a96" stroke="#000" stroke-width="1"/>
<rect x="213.3" y="473.5" width="23.1" height="7" fill="#8c1ee6" stroke="#000" stroke-width="1"/>
<rect x="236.4" y="473.5" width="22.9" height="7" fill="#b40ae6" stroke="#000" stroke-width="1"/>
<rect x="259.3" y="473.5" width="23.0" height="7" fill="#f000f0" stroke="#000" stroke-width="1"/>
<rect x="282.3" y="473.5" width="23.0" height="7" fill="#c800b4" stroke="#000" stroke-width="1"/>
<polygon points="305.3,473.5 329,477 305.3,480.5" fill="#a000a0"/>
<g font-family="Liberation Sans, sans-serif" font-size="13" fill="#000">
<text x="1" y="470.3" textLength="82" lengthAdjust="spacingAndGlyphs">Precipitation</text>
<text x="93" y="470.3" textLength="35" lengthAdjust="spacingAndGlyphs">[mm]</text>
<text x="137.7" y="470.3" textLength="50.6" lengthAdjust="spacingAndGlyphs">ARPEGE</text>
</g>
<g font-family="Liberation Sans, sans-serif" font-size="12" fill="#000">
<text x="0.5" y="493">0.1</text>
<text x="26.7" y="493">0.5</text>
<text x="51.0" y="493">1</text>
<text x="72.8" y="493">2</text>
<text x="95.3" y="493">5</text>
<text x="121.0" y="493">10</text>
<text x="142.0" y="493">15</text>
<text x="164.4" y="493">20</text>
<text x="187.5" y="493">25</text>
<text x="210.8" y="493">30</text>
<text x="234.0" y="493">35</text>
<text x="257.0" y="493">40</text>
<text x="280.0" y="493">45</text>
<text x="303.4" y="493">50</text>
</g>
<text x="363.5" y="470.2" textLength="265" lengthAdjust="spacingAndGlyphs" font-family="Liberation Sans, sans-serif" font-size="12.8" fill="#000">Sa 21–03–2026 15..18 UTC (06+36)</text>
<text x="487.5" y="484" textLength="124.5" lengthAdjust="spacingAndGlyphs" font-family="Liberation Sans, sans-serif" font-size="12" fill="#1e3ca0">©weatheronline.co.uk</text>
</svg>
</body></html>
